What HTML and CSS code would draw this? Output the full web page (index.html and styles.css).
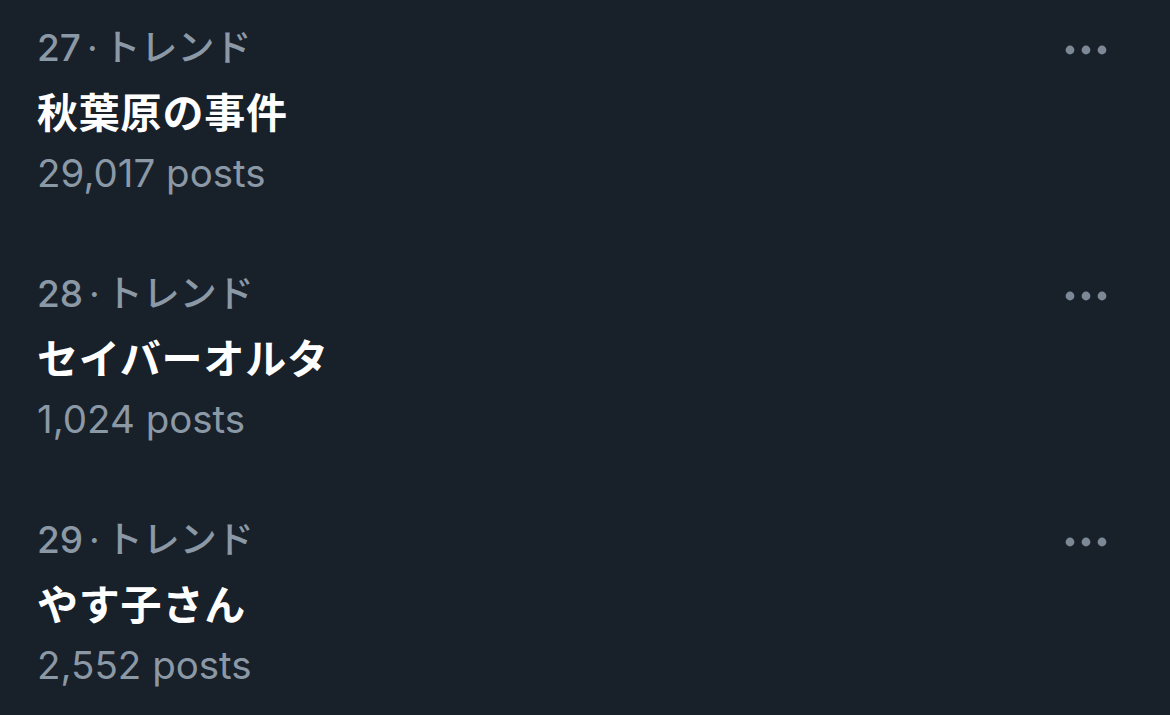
FILE: index.html
```html
<!DOCTYPE html>
<html lang="ja">
<head>
<meta charset="utf-8">
<link rel="stylesheet" href="styles.css">
</head>
<body>
<div class="list">
  <div class="trend">
    <div class="main">
      <div class="meta">27<span class="sep">·</span>トレンド</div>
      <div class="title">秋葉原の事件</div>
      <div class="count">29,017 posts</div>
    </div>
    <div class="more"><svg width="46" height="10" viewBox="0 0 46 10"><circle cx="5" cy="5" r="4.4"/><circle cx="21" cy="5" r="4.4"/><circle cx="37" cy="5" r="4.4"/></svg></div>
  </div>
  <div class="trend">
    <div class="main">
      <div class="meta">28<span class="sep">·</span>トレンド</div>
      <div class="title">セイバーオルタ</div>
      <div class="count">1,024 posts</div>
    </div>
    <div class="more"><svg width="46" height="10" viewBox="0 0 46 10"><circle cx="5" cy="5" r="4.4"/><circle cx="21" cy="5" r="4.4"/><circle cx="37" cy="5" r="4.4"/></svg></div>
  </div>
  <div class="trend">
    <div class="main">
      <div class="meta">29<span class="sep">·</span>トレンド</div>
      <div class="title">やす子さん</div>
      <div class="count">2,552 posts</div>
    </div>
    <div class="more"><svg width="46" height="10" viewBox="0 0 46 10"><circle cx="5" cy="5" r="4.4"/><circle cx="21" cy="5" r="4.4"/><circle cx="37" cy="5" r="4.4"/></svg></div>
  </div>
</div>
</body>
</html>
```
FILE: styles.css
```css
html, body {
  margin: 0;
  padding: 0;
  background: #18202a;
  height: 100%;
  overflow: hidden;
}
body {
  font-family: "Inter", "Noto Sans CJK JP", sans-serif;
  color: #ffffff;
}
.list {
  display: flex;
  flex-direction: column;
}
.trend {
  display: flex;
  justify-content: space-between;
  align-items: flex-start;
  padding: 22px 0 52px 37px;
  height: 172px;
}
.main {
  display: flex;
  flex-direction: column;
}
.meta {
  font-size: 37px;
  line-height: 52px;
  color: #8b98a5;
  font-weight: 500;
}
.sep {
  display: inline-block;
  margin: 0 6px;
  font-weight: 400;
}
.title {
  font-size: 41px;
  line-height: 78px;
  font-weight: 700;
  letter-spacing: 0.8px;
}
.count {
  font-size: 38.5px;
  line-height: 42px;
  color: #8b98a5;
}
.more {
  padding: 23px 59px 0 0;
  fill: #7c8896;
  line-height: 0;
}
```
